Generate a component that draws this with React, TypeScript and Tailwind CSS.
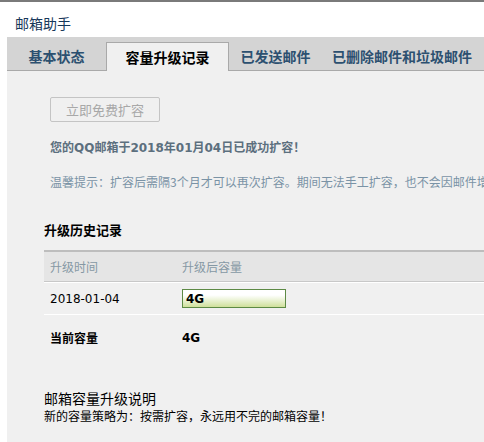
const FONT = { fontFamily: '"Microsoft YaHei", "Noto Sans CJK SC", "Noto Sans", sans-serif' };
const LATIN = { fontFamily: 'Verdana, "DejaVu Sans", sans-serif' };
const MIXED = { fontFamily: 'Verdana, "DejaVu Sans", "Noto Sans CJK SC", sans-serif' };

const TABS = ['基本状态', '容量升级记录', '已发送邮件', '已删除邮件和垃圾邮件'];

export default function App() {
  return (
    <div className="w-[484px] h-[442px] overflow-hidden bg-white border-t-2 border-[#7a7a7a]" style={FONT}>
      <div className="h-[35px] pl-[15px] pt-[11px] text-[14px] leading-[20px] text-[#17385a]">邮箱助手</div>

      {/* tab strip */}
      <div className="ml-[7px] h-[34px] bg-[#d4d4d4] border-b border-[#a9a9a9] flex items-end">
        <div className="w-[99px] h-[28px] flex items-center justify-center text-[14px] text-[#2c5070] font-semibold">{TABS[0]}</div>
        <div className="w-[123px] h-[29px] -mb-px bg-[#f0f0f0] border border-b-0 border-[#a9a9a9] flex items-center justify-center text-[14px] text-black font-semibold">
          {TABS[1]}
        </div>
        <div className="w-[93px] h-[28px] flex items-center justify-center text-[14px] text-[#2c5070] font-semibold">{TABS[2]}</div>
        <div className="h-[28px] pl-[10px] flex items-center whitespace-nowrap text-[14px] text-[#2c5070] font-semibold">{TABS[3]}</div>
      </div>

      <div className="ml-[7px] h-[372px] bg-[#f0f0f0] overflow-hidden">
        <div className="pl-[43px] pt-[26px]">
          <div className="w-[110px] h-[25px] border border-[#c4c4c4] rounded-[2px] flex items-center justify-center text-[13px] text-[#a8a8a8]">
            立即免费扩容
          </div>
          <div className="mt-[17px] text-[12px] leading-[18px] font-bold text-[#5c6f7e]" style={MIXED}>
            您的QQ邮箱于2018年01月04日已成功扩容！
          </div>
          <div className="mt-[16px] text-[12px] leading-[18px] text-[#7a93a6] whitespace-nowrap">
            温馨提示：扩容后需隔3个月才可以再次扩容。期间无法手工扩容，也不会因邮件增多而自动扩容。
          </div>
        </div>

        <div className="pl-[37px] mt-[30px]">
          <div className="text-[13px] leading-[18px] font-bold text-black">升级历史记录</div>
          <div className="mt-[11px] border-t-2 border-[#bdbdbd]">
            <div className="h-[30px] bg-[#e5e5e5] border-b border-[#c8c8c8] flex items-center text-[12px] text-[#8598a4]">
              <div className="w-[138px] pl-[6px]">升级时间</div>
              <div>升级后容量</div>
            </div>
            <div className="h-[33px] border-t border-white border-b border-[#c8c8c8] flex items-center text-[12px] text-black">
              <div className="w-[138px] pl-[6px]" style={LATIN}>2018-01-04</div>
              <div className="w-[104px] h-[19px] border border-[#5d8a45] bg-gradient-to-b from-white from-30% to-[#cfe09a] flex items-center pl-[3px] font-bold" style={LATIN}>
                4G
              </div>
            </div>
            <div className="h-[46px] flex items-center text-[12px] font-bold text-black">
              <div className="w-[138px] pl-[6px]">当前容量</div>
              <div style={LATIN}>4G</div>
            </div>
          </div>
          <div className="mt-[27px] text-[14px] leading-[20px] text-black">邮箱容量升级说明</div>
          <div className="text-[12px] leading-[16px] text-black">新的容量策略为：按需扩容，永远用不完的邮箱容量！</div>
        </div>
      </div>
    </div>
  );
}
